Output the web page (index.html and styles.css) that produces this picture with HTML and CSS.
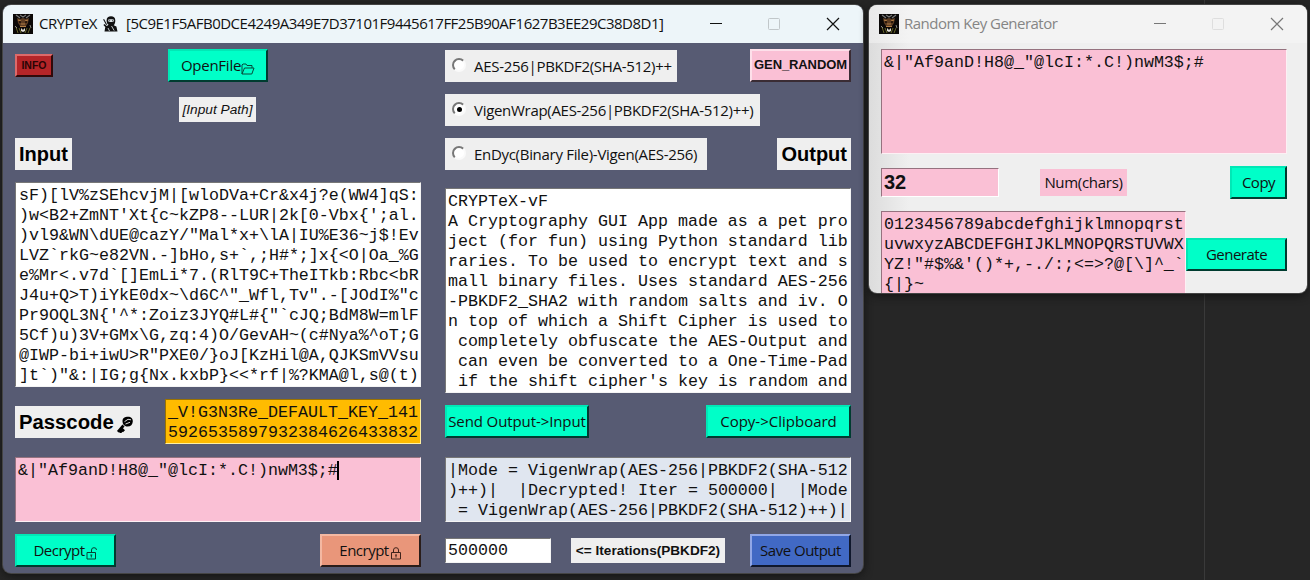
FILE: index.html
```html
<!DOCTYPE html>
<html lang="en">
<head>
<meta charset="utf-8">
<title>CRYPTeX</title>
<link rel="stylesheet" href="styles.css">
</head>
<body>
<svg width="0" height="0" class="defs">
  <symbol id="owl" viewBox="0 0 20 20">
    <rect width="20" height="20" fill="#0b0807"/>
    <path d="M3 1l4 3M17 1l-4 3M7 1l3 2 3-2" stroke="#777" stroke-width="1.2" fill="none"/>
    <path d="M4 4l3 1 3-1 3 1 3-1-1 5-2 3h-6L5 9z" fill="#5c3c22"/>
    <path d="M5 6l3 1M15 6l-3 1M8 10h4M7 12.500h6" stroke="#b07c44" stroke-width="1.1"/>
    <path d="M6 8h2M12 8h2" stroke="#1a0d05" stroke-width="1.6"/>
    <path d="M8 14l2 2 2-2v3l-2 1-2-1z" fill="#dedad0"/>
    <path d="M3 13l2 6M17 14l-2 5M6 14l2 5M14 14l-2 5" stroke="#66652a" stroke-width="1"/>
    <path d="M2 12l2 2M17 11l1 3" stroke="#8b8a84" stroke-width="1"/>
  </symbol>
</svg>

<div class="window main">
  <div class="titlebar">
    <svg class="app-icon"><use href="#owl"/></svg>
    <span class="title t-name">CRYPTeX</span>
    <svg class="ninja" viewBox="0 0 15 16">
      <path d="M3.600 4.400C3.600 1.500 5.500 .2 8 .2s4.300 1.300 4.300 4.200c0 2.200-.6 3.700-1.600 4.800l2.700 1.300 1.100 5.100H1.500l.8-4.600L.4 9l1-1 2.400 2 1.800-1.200C4.300 8 3.600 6.400 3.600 4.400z" fill="#111"/>
      <path d="M5.300 3.600q2.700-.9 5.400 0v1.900q-2.700.8-5.400 0z" fill="#eef6fa"/>
      <path d="M6.300 4.600h.9M8.900 4.600h.9" stroke="#111" stroke-width=".9"/>
      <path d="M.6 3.300l3 5.500" stroke="#111" stroke-width="1.100"/>
      <path d="M8.500 10l2.700 4.600M5 12l1.500 3" stroke="#eef6fa" stroke-width=".8"/>
    </svg>
    <span class="title t-hash">[5C9E1F5AFB0DCE4249A349E7D37101F9445617FF25B90AF1627B3EE29C38D8D1]</span>
    <svg class="controls" viewBox="0 0 132 16">
      <path d="M1 7.500h12" stroke="#111"/>
      <rect x="59.500" y="2.500" width="11" height="11" rx="1" fill="none" stroke="#c1c7ca"/>
      <path d="M118 2l12 12M130 2l-12 12" stroke="#111" stroke-width="1.200"/>
    </svg>
  </div>
  <div class="main-body">
    <div class="column">
      <div class="row top">
        <button class="btn info">INFO</button>
        <button class="btn green open">OpenFile<svg class="glyph folder" viewBox="0 0 14 12"><path d="M1 11V2l1-1h3l1 1.500h5V5M1 11L3.500 5H13l-2.200 6z" fill="none" stroke="#064a3a" stroke-width="1"/></svg></button>
      </div>
      <div class="row path-row"><span class="path">[Input Path]</span></div>
      <div class="row heading"><span class="label">Input</span></div>
      <pre class="text input-text">sF)[lV%zSEhcvjM|[wloDVa+Cr&amp;x4j?e(WW4]qS:
)w&lt;B2+ZmNT'Xt{c~kZP8--LUR|2k[0-Vbx{';al.
)vl9&amp;WN\dUE@cazY/"Mal*x+\lA|IU%E36~j$!Ev
LVZ`rkG~e82VN.-]bHo,s+`,;H#*;]x{&lt;O|Oa_%G
e%Mr&lt;.v7d`[]EmLi*7.(RlT9C+TheITkb:Rbc&lt;bR
J4u+Q&gt;T)iYkE0dx~\d6C^"_Wfl,Tv".-[JOdI%"c
Pr9OQL3N{'^*:Zoiz3JYQ#L#{"`cJQ;BdM8W=mlF
5Cf)u)3V+GMx\G,zq:4)O/GevAH~(c#Nya%^oT;G
@IWP-bi+iwU&gt;R"PXE0/}oJ[KzHil@A,QJKSmVVsu
]t`)"&amp;:|IG;g{Nx.kxbP}&lt;&lt;*rf|%?KMA@l,s@(t)</pre>
      <div class="row pass-row">
        <span class="label pass">Passcode<svg class="key" viewBox="0 0 18 17"><path d="M7.500 9.500L2 15.800M5 12.300l3 3M3.300 14.300l2.500 2.200" stroke="#000" stroke-width="2.800" fill="none"/><path d="M6.500 5c0-3 2.500-4.300 5.500-4.300S17 2.500 16.800 5.500s-2 5-5.300 5-5-2.500-5-5.500z" fill="#000"/><path d="M8.500 5.700l3.500-2.400 3 .5M9.500 8l4.500-1.700" stroke="#efefef" stroke-width=".9" fill="none"/></svg></span>
        <pre class="text key-text">_V!G3N3Re_DEFAULT_KEY_141
5926535897932384626433832</pre>
      </div>
      <pre class="text pink pass-text">&amp;|"Af9anD!H8@_"@lcI:*.C!)nwM3$;#<i class="caret"></i></pre>
      <div class="row bottom">
        <button class="btn green wide">Decrypt<svg class="glyph lock" viewBox="0 0 12 13"><path d="M1 5.500h8.500V12H1zM5.500 5.500V3q0-2.300 2.500-2.300T10.500 3M5.300 8v2.500M4.300 8h2" fill="none" stroke="#063f32"/></svg></button>
        <button class="btn salmon wide">Encrypt<svg class="glyph lock" viewBox="0 0 12 13"><path d="M1.500 5.500h9V12h-9zM3.500 5.500V3Q3.500.7 6 .7T8.500 3v2.500M6 8v2.500M5 8h2" fill="none" stroke="#40241c"/></svg></button>
      </div>
    </div>

    <div class="column">
      <div class="row top">
        <label class="radio r1"><i class="dot"></i><span>AES-256|PBKDF2(SHA-512)++</span></label>
        <button class="btn pinkbtn wide">GEN_RANDOM</button>
      </div>
      <div class="row second"><label class="radio r2"><i class="dot on"></i><span>VigenWrap(AES-256|PBKDF2(SHA-512)++)</span></label></div>
      <div class="row third">
        <label class="radio r3"><i class="dot"></i><span>EnDyc(Binary File)-Vigen(AES-256)</span></label>
        <span class="label out">Output</span>
      </div>
      <pre class="text output-text">CRYPTeX-vF
A Cryptography GUI App made as a pet pro
ject (for fun) using Python standard lib
raries. To be used to encrypt text and s
mall binary files. Uses standard AES-256
-PBKDF2_SHA2 with random salts and iv. O
n top of which a Shift Cipher is used to
 completely obfuscate the AES-Output and
 can even be converted to a One-Time-Pad
 if the shift cipher's key is random and</pre>
      <div class="row transfer">
        <button class="btn green send">Send Output-&gt;Input</button>
        <button class="btn green clip">Copy-&gt;Clipboard</button>
      </div>
      <pre class="text status">|Mode = VigenWrap(AES-256|PBKDF2(SHA-512
)++)|  |Decrypted! Iter = 500000|  |Mode
 = VigenWrap(AES-256|PBKDF2(SHA-512)++)|</pre>
      <div class="row bottom">
        <span class="text entry">500000</span>
        <span class="iter">&lt;= Iterations(PBKDF2)</span>
        <button class="btn blue wide">Save Output</button>
      </div>
    </div>
  </div>
</div>

<div class="window gen">
  <div class="titlebar">
    <svg class="app-icon"><use href="#owl"/></svg>
    <span class="title t-gen">Random Key Generator</span>
    <svg class="controls" viewBox="0 0 132 16">
      <path d="M1 7.500h12" stroke="#777"/>
      <rect x="59.500" y="2.500" width="11" height="11" rx="1" fill="none" stroke="#dedede"/>
      <path d="M118 2l12 12M130 2l-12 12" stroke="#777" stroke-width="1.200"/>
    </svg>
  </div>
  <div class="gen-body">
    <pre class="text pink gen-text">&amp;|"Af9anD!H8@_"@lcI:*.C!)nwM3$;#</pre>
    <div class="row gen-mid">
      <span class="count">32</span>
      <span class="num">Num(chars)</span>
      <button class="btn green copy">Copy</button>
    </div>
    <div class="row gen-low">
      <pre class="text pink chars">0123456789abcdefghijklmnopqrst
uvwxyzABCDEFGHIJKLMNOPQRSTUVWX
YZ!"#$%&amp;'()*+,-./:;&lt;=&gt;?@[\]^_`
{|}~</pre>
      <button class="btn green generate">Generate</button>
    </div>
  </div>
</div>
</body>
</html>
```
FILE: styles.css
```css
* { box-sizing: border-box; }
body {
  margin: 0;
  width: 1310px;
  height: 580px;
  overflow: hidden;
  position: relative;
  background: linear-gradient(90deg, transparent 1204px, #3a3a3a 1204px, #3a3a3a 1205px, transparent 1205px), #262626;
  font-family: "Open Sans", "Noto Sans", sans-serif;
  font-size: 15px;
  color: #111;
}
.defs { position: absolute; }

/* windows */
.window {
  position: absolute;
  top: 5px;
  border-radius: 8px;
  overflow: hidden;
  box-shadow: 0 0 0 1px #444, 0 2px 10px #111;
}
.main { left: 3px; width: 860px; height: 568px; background: #575b73; }
.gen { left: 869px; width: 438px; height: 288px; background: linear-gradient(90deg, #dcdcdc, #efefef 40px); }
.titlebar { display: flex; align-items: center; height: 38px; padding: 0 22px 0 10px; }
.main .titlebar { background: #edf5f9; }
.gen .titlebar { background: linear-gradient(90deg, #e9e9e9, #f3f3f3 40px); }
.app-icon { width: 20px; height: 20px; margin-right: 6px; flex: none; }
.title { position: relative; top: -1px; font-size: 15px; line-height: 20px; white-space: nowrap; }
.t-name { width: 64px; letter-spacing: -0.5px; }
.ninja { width: 15px; height: 16px; margin-right: 8px; flex: none; }
.t-hash { letter-spacing: -0.5px; }
.t-gen { color: #858585; letter-spacing: -0.52px; margin-left: -1px; }
.controls { width: 132px; height: 16px; margin-left: auto; flex: none; }

/* layout */
.main-body { display: flex; gap: 24px; padding: 6px 12px; }
.column { width: 406px; }
.row { display: flex; align-items: center; justify-content: space-between; }
.top { height: 33px; justify-content: flex-start; }
.top .pinkbtn { margin-left: auto; }
.path-row { height: 25px; margin-top: 15px; padding-left: 164px; justify-content: flex-start; }
.heading { height: 32px; margin-top: 16px; }
.second { height: 32px; margin-top: 12px; }
.third { height: 32px; margin-top: 12px; }
.pass-row { height: 45px; margin-top: 12px; }
.transfer { height: 33px; margin-top: 12px; }
.bottom { height: 33px; margin-top: 12px; }

/* buttons */
.btn {
  display: flex;
  align-items: center;
  justify-content: center;
  height: 33px;
  padding: 0 0 1px;
  border: 2px solid;
  font: 15px/20px "Open Sans", "Noto Sans", sans-serif;
  letter-spacing: -0.5px;
  white-space: nowrap;
  color: #111;
}
.green { background: #00ffc8; border-color: #00e8b6 #003c30 #003c30 #00e8b6; }
.salmon { background: #e9967a; border-color: #f4b8a2 #2a1d1a #2a1d1a #f4b8a2; }
.blue { background: #4169c4; border-color: #91a7e6 #10182c #10182c #91a7e6; }
.pinkbtn { background: #fac0d5; border-color: #fde0ea #3a2c34 #3a2c34 #fde0ea; padding-bottom: 2px; font: bold 13px "Liberation Sans", sans-serif; letter-spacing: -0.1px; }
.info { width: 38px; height: 23px; background: #b52528; border-color: #dd6a6a #300a0a #300a0a #dd6a6a; font: bold 10.500px "Liberation Sans", sans-serif; letter-spacing: 0; color: #2a0405; }
.open { width: 100px; margin-left: 115px; letter-spacing: -0.25px; }
.wide { width: 101px; }
.send { width: 144px; letter-spacing: -0.1px; }
.clip { width: 145px; letter-spacing: 0; }
.glyph { margin-top: 7px; flex: none; }
.folder { width: 14px; height: 12px; }
.lock { width: 12px; height: 13px; margin-left: 1px; }

/* labels */
.label { height: 32px; padding: 0 4px; background: #efefef; font: bold 20px/32px "Liberation Sans", sans-serif; color: #000; white-space: nowrap; }
.pass { display: flex; align-items: center; width: 125px; font-size: 20.300px; }
.key { width: 18px; height: 17px; margin: 6px 0 0 2px; }
.path { height: 25px; width: 77px; background: #efefef; text-align: center; font: italic 13.700px/25px "Liberation Sans", sans-serif; }
.radio { display: flex; align-items: center; height: 32px; padding-left: 7px; background: #efefef; white-space: nowrap; letter-spacing: -0.3px; }
.r1 { width: 232px; }
.r2 { width: 315px; }
.r3 { width: 262px; }
.dot { position: relative; width: 14px; height: 14px; margin: -2px 8px 0 0; border-radius: 50%; background: #fff; border: 2px solid; border-color: #777 #fafafa #fafafa #777; flex: none; }
.dot.on::after { content: ""; position: absolute; left: 3px; top: 3px; width: 5px; height: 5px; border-radius: 50%; background: #000; }
.iter { width: 154px; height: 25px; margin-right: 5px; background: #efefef; text-align: center; white-space: nowrap; font: bold 13.600px/25px "Liberation Sans", sans-serif; }

/* text fields */
.text {
  margin: 0;
  overflow: hidden;
  border: 1px solid;
  border-color: #777 #f4f4f4 #f4f4f4 #777;
  padding: 3px 2px;
  background: #fff;
  font: 16.660px/20px "Liberation Mono", monospace;
  color: #111;
}
.pink { background: #fac0d5; border-color: #95727f #fdf0f4 #fdf0f4 #95727f; }
.input-text { height: 205px; margin-top: 12px; padding-left: 3px; }
.output-text { height: 205px; margin-top: 18px; }
.key-text { width: 256px; height: 45px; background: #ffbb00; border-color: #9a7200 #fff0a0 #fff0a0 #9a7200; }
.pass-text { height: 65px; margin-top: 13px; }
.status { height: 65px; margin-top: 19px; background: #e0e6f0; }
.entry { width: 106px; height: 25px; padding: 2px; }
.caret { display: inline-block; width: 2px; height: 19px; margin-left: -1px; background: #000; vertical-align: top; }

/* generator window */
.gen-body { padding: 6px 12px; }
.gen-text { width: 406px; height: 105px; }
.gen-mid { width: 406px; height: 33px; margin-top: 12px; justify-content: flex-start; }
.count { width: 118px; height: 29px; padding-left: 2px; background: #fac0d5; border: 1px solid; border-color: #95727f #fff #fff #95727f; font: bold 20px/27px "Liberation Sans", sans-serif; }
.num { width: 87px; height: 27px; margin-left: 41px; background: #fac0d5; line-height: 27px; text-align: center; letter-spacing: -0.3px; }
.copy { width: 57px; margin-left: auto; }
.gen-low { width: 406px; height: 85px; margin-top: 12px; align-items: flex-start; }
.chars { width: 305px; height: 85px; }
.generate { width: 101px; margin-top: 27px; }
```
